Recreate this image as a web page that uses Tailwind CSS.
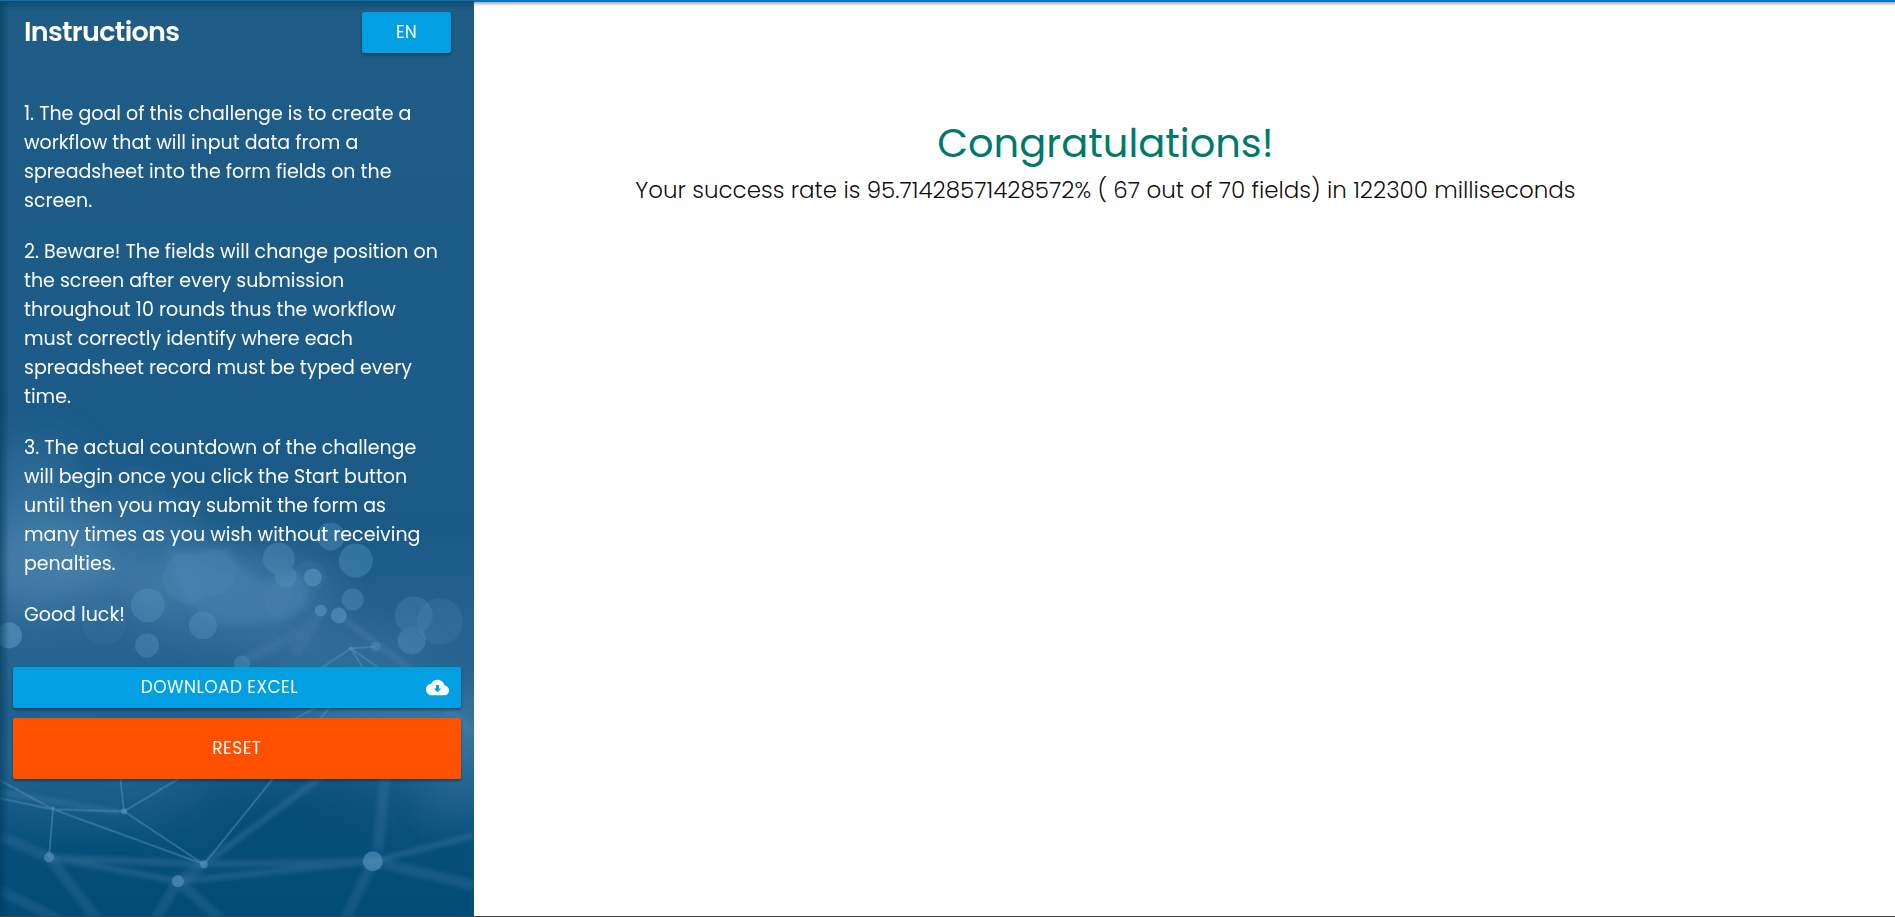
<!DOCTYPE html>
<html lang="en">
<head>
<meta charset="utf-8">
<title>Challenge</title>
<script src="https://cdn.jsdelivr.net/npm/@tailwindcss/browser@4"></script>
</head>
<body class="flex min-h-screen flex-col border-b border-[#444444] bg-white font-['Poppins','Inter',sans-serif]">
<div class="flex flex-1">
  <aside class="relative isolate w-1/4 shrink-0 overflow-hidden border-t border-[#0277bd] bg-[#1d5c88] text-white">
    <svg class="absolute inset-0 -z-10 size-full" viewBox="0 0 474 916" preserveAspectRatio="xMidYMid slice" aria-hidden="true">
      <defs>
        <linearGradient id="base" x1="0" y1="0" x2="0" y2="1">
          <stop offset="0" stop-color="#1f5c86"/><stop offset=".45" stop-color="#1c5b88"/><stop offset=".58" stop-color="#1b5a87"/><stop offset=".7" stop-color="#286492"/><stop offset=".82" stop-color="#1f5f8c"/><stop offset=".93" stop-color="#06507b"/><stop offset="1" stop-color="#014b77"/>
        </linearGradient>
        <filter id="soft" x="-50%" y="-50%" width="200%" height="200%"><feGaussianBlur stdDeviation="22"/></filter>
        <filter id="edge" x="-20%" y="-20%" width="140%" height="140%"><feGaussianBlur stdDeviation="2"/></filter>
        <filter id="haze" x="-20%" y="-20%" width="140%" height="140%"><feGaussianBlur stdDeviation="4"/></filter>
        <linearGradient id="left"><stop offset="0" stop-color="#003a55" stop-opacity=".6"/><stop offset="1" stop-color="#003a55" stop-opacity="0"/></linearGradient>
        <linearGradient id="top" x1="0" y1="0" x2="0" y2="1"><stop offset="0" stop-color="#003a55" stop-opacity=".5"/><stop offset="1" stop-color="#003a55" stop-opacity="0"/></linearGradient>
      </defs>
      <rect width="474" height="916" fill="url(#base)"/>
      <g filter="url(#soft)" fill="#5c95bd">
        <ellipse cx="35" cy="565" rx="80" ry="48" opacity=".55"/>
        <ellipse cx="30" cy="490" rx="50" ry="50" opacity=".3"/>
        <ellipse cx="225" cy="590" rx="110" ry="38" opacity=".42"/>
        <ellipse cx="130" cy="545" rx="80" ry="50" opacity=".3"/>
        <ellipse cx="330" cy="655" rx="90" ry="22" opacity=".22"/>
        <ellipse cx="400" cy="720" rx="110" ry="32" opacity=".4"/>
        <ellipse cx="70" cy="775" rx="130" ry="40" opacity=".12"/>
        <ellipse cx="460" cy="765" rx="30" ry="50" opacity=".28"/>
      </g>
      <ellipse cx="290" cy="820" rx="90" ry="26" fill="#004877" opacity=".7" filter="url(#soft)"/>
      <path filter="url(#haze)" fill="#4c88b4" fill-opacity=".4" d="M165 550 225 545 258 580 300 572 312 600 280 622 225 625 185 605Z"/>
      <g filter="url(#edge)" stroke="#5687b0" fill="none" stroke-opacity=".3">
        <path stroke-width="6" d="M49 857 204 864M204 864 373 861 474 835M49 857 178 881 373 861M204 864 330 770M0 792 53 801 120 812M339 615 410 668"/>
        <path stroke-width="11" stroke-opacity=".22" d="M0 836 49 857 98 920M0 890 60 920M204 864 178 881 155 920M178 881 222 920M373 861 345 920M378 850 386 770M373 861 474 885M321 610 295 655M314 625 245 660M440 700 474 735"/>
      </g>
      <path fill="none" stroke="#5b97c0" stroke-width="1.6" stroke-opacity=".55" d="M0 780 53 809 204 864M0 798 53 809 124 811 204 864M53 809 49 857M124 811 119 765M124 811 176 780 330 700M204 864 271 781 335 700M351 648 315 672M351 648 378 667M351 648 363 667M351 648 376 646"/>
      <g fill="#5593bc">
        <g opacity=".2"><circle cx="104" cy="623" r="22" opacity=".6"/><circle cx="188" cy="578" r="25"/><circle cx="213" cy="572" r="23"/><circle cx="240" cy="566" r="24" opacity=".4"/><circle cx="285" cy="600" r="20" opacity=".6"/><circle cx="440" cy="621" r="23"/><circle cx="310" cy="576" r="16" opacity=".6"/><circle cx="138" cy="492" r="28" opacity=".3"/></g>
        <g opacity=".42"><circle cx="148" cy="605" r="17"/><circle cx="203" cy="625" r="14"/><circle cx="279" cy="558" r="16"/><circle cx="331" cy="536" r="14"/><circle cx="356" cy="560" r="17"/><circle cx="286" cy="576" r="11"/><circle cx="353" cy="599" r="11"/><circle cx="414" cy="615" r="19" opacity=".7"/><circle cx="412" cy="640" r="14"/><circle cx="147" cy="645" r="12"/><circle cx="242" cy="663" r="8"/><circle cx="376" cy="646" r="5"/></g>
        <g opacity=".65"><circle cx="9" cy="635" r="13"/><circle cx="313" cy="577" r="9"/><circle cx="321" cy="610" r="6"/><circle cx="339" cy="615" r="8"/><circle cx="373" cy="861" r="10"/><circle cx="178" cy="881" r="6"/><circle cx="49" cy="857" r="5"/><circle cx="204" cy="864" r="4"/><circle cx="124" cy="811" r="3"/><circle cx="53" cy="808" r="2"/><circle cx="351" cy="648" r="2"/></g>
      </g>
      <rect width="9" height="916" fill="url(#left)"/>
      <rect width="474" height="9" fill="url(#top)"/>
    </svg>
    <div class="flex items-start justify-between pt-[11px] pr-[23px] pl-6">
      <h1 class="text-[27px] leading-10 font-semibold tracking-tight">Instructions</h1>
      <button type="button" class="h-[41px] w-[89px] rounded-xs bg-[#039fe3] text-[17px] shadow-[0_2px_3px_rgba(0,0,0,0.35)]">EN</button>
    </div>
    <div class="mt-[46px] space-y-[22px] pl-6 text-[19px] leading-[29px]">
      <p>1. The goal of this challenge is to create a<br>workflow that will input data from a<br>spreadsheet into the form fields on the<br>screen.</p>
      <p>2. Beware! The fields will change position on<br>the screen after every submission<br>throughout 10 rounds thus the workflow<br>must correctly identify where each<br>spreadsheet record must be typed every<br>time.</p>
      <p>3. The actual countdown of the challenge<br>will begin once you click the Start button<br>until then you may submit the form as<br>many times as you wish without receiving<br>penalties.</p>
      <p>Good luck!</p>
    </div>
    <div class="mt-[38px] flex flex-col gap-[10px] px-[13px]">
      <a href="#" class="flex h-[41px] items-center rounded-xs bg-[#039fe3] pr-3 text-[17px] tracking-wide shadow-[0_2px_3px_rgba(0,0,0,0.35)]">
        <span class="flex-1 text-center">DOWNLOAD EXCEL</span>
        <svg class="size-[23px]" viewBox="0 0 24 24" fill="currentColor" aria-hidden="true"><path d="M19.35 10.04C18.67 6.59 15.64 4 12 4 9.11 4 6.6 5.64 5.35 8.04 2.34 8.36 0 10.91 0 14c0 3.31 2.69 6 6 6h13c2.76 0 5-2.24 5-5 0-2.64-2.05-4.78-4.65-4.96zM16 13l-4 4-4-4h2.500V9.500h3V13z"/></svg>
      </a>
      <button type="button" class="h-[61px] rounded-xs bg-[#ff5000] text-[17px] tracking-wide shadow-[0_2px_3px_rgba(0,0,0,0.35)]">RESET</button>
    </div>
  </aside>
  <main class="flex-1 border-t-2 border-[#0277bd] shadow-[inset_0_6px_3px_-4px_rgba(0,0,0,0.35)]">
    <div class="w-8/9 pt-[118px] text-center">
      <h2 class="text-[40px] leading-[46px] text-[#00796b]">Congratulations!</h2>
      <p class="mt-[7px] text-[23px] leading-[34px] font-light text-black/95">Your success rate is 95.71428571428572% ( 67 out of 70 fields) in 122300 milliseconds</p>
    </div>
  </main>
</div>
</body>
</html>
